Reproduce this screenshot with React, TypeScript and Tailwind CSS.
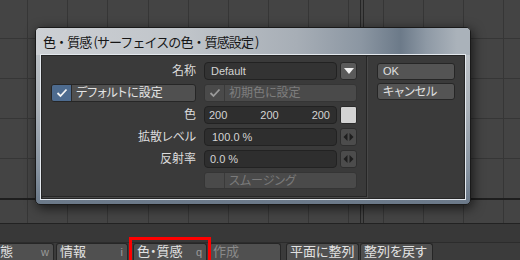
import React from "react";

const vLeft = [27, 67, 107, 148, 188, 228, 268, 308, 348];
const vRight = [383, 423, 463, 503];
const hLines = [38, 78, 118, 158];

function Grid() {
  return (
    <svg width="520" height="223" className="block">
      <rect x="0" y="0" width="520" height="223" fill="#444444" />
      {vLeft.concat(vRight).map((x) => (
        <line key={"v" + x} x1={x + 0.5} y1="0" x2={x + 0.5} y2="223" stroke="#363636" strokeWidth="1" />
      ))}
      {hLines.map((y) => (
        <line key={"h" + y} x1="0" y1={y + 0.5} x2="520" y2={y + 0.5} stroke="#363636" strokeWidth="1" />
      ))}
      <line x1="0" y1="199" x2="520" y2="199" stroke="#1e1e1e" strokeWidth="2" />
      <line x1="360.5" y1="0" x2="360.5" y2="223" stroke="#262626" strokeWidth="1" />
      <line x1="363.5" y1="0" x2="363.5" y2="223" stroke="#262626" strokeWidth="1" />
    </svg>
  );
}

function Check({ color }: { color: string }) {
  return (
    <svg width="12" height="10" viewBox="0 0 12 10">
      <polyline points="1.5,5 4.5,8 10.5,1.5" fill="none" stroke={color} strokeWidth="1.8" />
    </svg>
  );
}

function Spin() {
  return (
    <div className="ml-[3px] w-[17px] h-[18px] rounded-[3px] border border-[#2e2e2e] bg-[#4c4c4c] flex items-center justify-center">
      <svg width="11" height="8" viewBox="0 0 11 8">
        <polygon points="4.5,0 4.5,8 0.5,4" fill="#1e1e1e" />
        <polygon points="6.5,0 6.5,8 10.5,4" fill="#1e1e1e" />
      </svg>
    </div>
  );
}

function Label({ children }: { children: React.ReactNode }) {
  return <div className="w-[154px] text-right text-[12px] leading-[18px] text-[#dcdcdc]">{children}</div>;
}

function Field({ children, className = "" }: { children: React.ReactNode; className?: string }) {
  return (
    <div
      className={
        "ml-[8px] w-[133px] h-[18px] rounded-[4px] border border-[#222] bg-[#2e2e2e] flex items-center text-[11px] text-[#d4d4d4] " +
        className
      }
    >
      {children}
    </div>
  );
}

function BottomBtn({
  label,
  hint,
  className = "",
  disabled = false,
}: {
  label: string;
  hint?: string;
  className?: string;
  disabled?: boolean;
}) {
  return (
    <div
      className={
        "h-[17px] whitespace-nowrap overflow-hidden rounded-t-[3px] border border-b-0 border-[#262626] bg-[#505050] flex items-center justify-between pl-[3px] pr-[4px] text-[13px] leading-[16px] " +
        (disabled ? "text-[#8a8a8a] " : "text-[#e2e2e2] ") +
        className
      }
    >
      <span>{label}</span>
      {hint && <span className="text-[11px] text-[#9a9a9a]">{hint}</span>}
    </div>
  );
}

export default function App() {
  return (
    <div className="relative w-[520px] h-[260px] overflow-hidden bg-[#3b3b3b] flex flex-col font-['Liberation_Sans','Noto_Sans_CJK_JP',sans-serif] [font-feature-settings:'palt']">
      <div className="h-[223px]">
        <Grid />
      </div>
      <div className="h-[20px] border-t border-[#222] border-b border-b-[#2c2c2c] bg-[#383838]" />
      <div className="flex items-end h-[17px] bg-[#3b3b3b]">
        <BottomBtn label="態" hint="w" className="-ml-[4px] w-[58px] shrink-0" />
        <BottomBtn label="情報" hint="i" className="ml-[2px] w-[72px] shrink-0" />
        <BottomBtn label="色・質感" hint="q" className="ml-[5px] w-[74px] shrink-0" />
        <BottomBtn label="作成" disabled className="ml-[2px] w-[72px] shrink-0 bg-[#474747]" />
        <BottomBtn label="平面に整列" className="ml-[5px] w-[73px] shrink-0" />
        <BottomBtn label="整列を戻す" className="ml-[1px] w-[73px] shrink-0" />
      </div>

      {/* red annotation */}
      <div className="absolute left-[129px] top-[237px] w-[82px] h-[26px] border-[3px] border-[#ff0000]" />

      {/* dialog */}
      <div className="absolute left-[35px] top-[27px] w-[436px] h-[178px] rounded-[5px] border border-[#1a1a1a] shadow-[2px_3px_12px_rgba(0,0,0,0.65)] bg-[linear-gradient(180deg,#c5c9cd_0%,#a9b0b7_45%,#8793a0_80%,#6a7888_100%)] flex flex-col overflow-hidden">
        <div className="h-[27px] flex items-center pl-[7px] pt-[1px] whitespace-nowrap text-[13px] tracking-[-0.9px] font-['Noto_Sans_CJK_JP',sans-serif] [font-feature-settings:normal] text-[#161616] bg-[linear-gradient(90deg,#cdd0d4_0%,#bfc4c9_35%,#a7aeb6_60%,#8b96a2_75%,#6c7a89_84%,#8e99a5_90%,#aab2ba_97%)]">
          色・質感 (サーフェイスの色・質感設定 )
        </div>
        <div className="flex-1 flex px-[5px] pb-[5px]">
          <div className="flex-1 flex bg-[#3a3a3a] border border-[#262626] shadow-[0_0_0_1px_#e4e9ee]">
            {/* left group */}
            <div className="w-[325px] h-[141px] border-r border-b border-[#262626] shadow-[1px_1px_0_#484848] flex flex-col gap-[4px] pt-[6px]">
              <div className="flex items-center">
                <Label>名称</Label>
                <Field className="pl-[6px] text-[#b4cdf5] bg-[#333]">Default</Field>
                <div className="ml-[3px] w-[17px] h-[18px] rounded-[3px] border border-[#2a2a2a] bg-[#5a5a5a] flex items-center justify-center">
                  <svg width="10" height="6" viewBox="0 0 10 6">
                    <polygon points="0,0 10,0 5,6" fill="#f2f2f2" />
                  </svg>
                </div>
              </div>
              <div className="flex items-center">
                <div className="ml-[9px] w-[145px] h-[18px] rounded-[3px] border border-[#262626] bg-[#505050] flex items-center overflow-hidden">
                  <div className="w-[20px] h-full bg-[#4d6b8f] border-r border-[#2a2a2a] flex items-center justify-center">
                    <Check color="#f4f4f4" />
                  </div>
                  <span className="ml-[4px] text-[12px] text-[#e4e4e4]">デフォルトに設定</span>
                </div>
                <div className="ml-[8px] w-[153px] h-[18px] rounded-[3px] border border-[#353535] bg-[#4a4a4a] flex items-center overflow-hidden">
                  <div className="w-[20px] h-full border-r border-[#3a3a3a] flex items-center justify-center">
                    <Check color="#9a9a9a" />
                  </div>
                  <span className="ml-[4px] text-[12px] text-[#7e7e7e]">初期色に設定</span>
                </div>
              </div>
              <div className="flex items-center">
                <Label>色</Label>
                <Field className="justify-between pl-[4px] pr-[6px]">
                  <span>200</span>
                  <span>200</span>
                  <span>200</span>
                </Field>
                <div className="ml-[3px] w-[17px] h-[18px] rounded-[2px] border border-[#2a2a2a] bg-[#d3d3d3]" />
              </div>
              <div className="flex items-center">
                <Label>拡散レベル</Label>
                <Field className="pl-[7px]">100.0 %</Field>
                <Spin />
              </div>
              <div className="flex items-center">
                <Label>反射率</Label>
                <Field className="pl-[5px]">0.0 %</Field>
                <Spin />
              </div>
              <div className="flex items-center">
                <div className="ml-[162px] w-[153px] h-[17px] rounded-[3px] border border-[#353535] bg-[#4a4a4a] flex items-center overflow-hidden">
                  <div className="w-[20px] h-full border-r border-[#3a3a3a]" />
                  <span className="ml-[4px] text-[12px] text-[#7a7a7a]">スムージング</span>
                </div>
              </div>
            </div>
            {/* right buttons */}
            <div className="flex flex-col gap-[3px] pt-[7px] ml-[10px]">
              <div className="w-[78px] h-[17px] rounded-[3px] border border-[#262626] bg-[#545454] flex items-center pl-[5px] text-[11px] text-[#e0e0e0]">
                OK
              </div>
              <div className="w-[78px] h-[17px] rounded-[3px] border border-[#262626] bg-[#545454] flex items-center pl-[5px] text-[12px] text-[#e0e0e0]">
                キャンセル
              </div>
            </div>
          </div>
        </div>
      </div>
    </div>
  );
}
